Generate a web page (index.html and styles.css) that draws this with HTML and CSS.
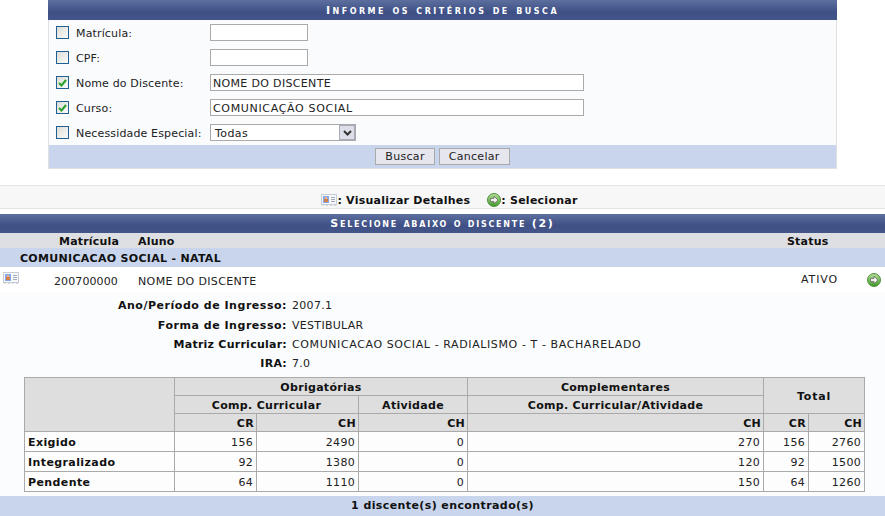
FILE: index.html
```html
<!DOCTYPE html>
<html lang="pt">
<head>
<meta charset="utf-8">
<title>Busca de discente</title>
<link rel="stylesheet" href="styles.css">
</head>
<body>
<svg class="defs" width="0" height="0" aria-hidden="true">
  <defs>
    <linearGradient id="ball" x1="0" y1="0" x2="0" y2="1"><stop offset="0" stop-color="#b9e09a"/><stop offset="1" stop-color="#3d9a2a"/></linearGradient>
    <symbol id="card" viewBox="0 0 16 12">
      <rect x="0.500" y="0.500" width="15" height="10" fill="#f6f8fb" stroke="#c8ccd4"/>
      <rect x="2" y="2" width="6" height="7" fill="#86a8ea"/>
      <rect x="4" y="3" width="2" height="2" fill="#f0b078"/>
      <rect x="3" y="5" width="4" height="3" fill="#d08048"/>
      <path d="M10 3.500h4M10 5.500h4M10 7.500h4" stroke="#a4acbc" stroke-width="1"/>
      <path d="M1 11.500h2M5 11.500h2M9 11.500h2M13 11.500h2" stroke="#d2d5da" stroke-width="1"/>
    </symbol>
    <symbol id="go" viewBox="0 0 14 14">
      <circle cx="7" cy="7" r="6.500" fill="url(#ball)" stroke="#4f8f3c"/>
      <path d="M7 3.200 L11 7 L7 10.800 V8.600 H3.500 V5.400 H7 Z" fill="#f2f2ee" stroke="#6a6a66" stroke-width="0.800"/>
    </symbol>
  </defs>
</svg>

<section class="form-box">
  <h2 class="bar">Informe os critérios de busca</h2>
  <div class="form-body">
    <div class="form-row"><span class="check"></span><label class="lbl">Matrícula:</label><span class="input short"></span></div>
    <div class="form-row"><span class="check"></span><label class="lbl">CPF:</label><span class="input short"></span></div>
    <div class="form-row"><span class="check on"><svg width="9" height="8" viewBox="0 0 9 8"><path d="M1 4l2.500 2.500L8 1" fill="none" stroke="#2aa02a" stroke-width="2"/></svg></span><label class="lbl">Nome do Discente:</label><span class="input long">NOME DO DISCENTE</span></div>
    <div class="form-row"><span class="check on"><svg width="9" height="8" viewBox="0 0 9 8"><path d="M1 4l2.500 2.500L8 1" fill="none" stroke="#2aa02a" stroke-width="2"/></svg></span><label class="lbl">Curso:</label><span class="input long wide">COMUNICAÇÃO SOCIAL</span></div>
    <div class="form-row"><span class="check"></span><label class="lbl">Necessidade Especial:</label>
      <span class="select"><span class="select-text">Todas</span><span class="select-btn"><svg width="9" height="6" viewBox="0 0 9 6"><path d="M1 1l3.500 3.500L8 1" fill="none" stroke="#333" stroke-width="2"/></svg></span></span>
    </div>
  </div>
  <div class="form-foot"><span class="btn">Buscar</span><span class="btn">Cancelar</span></div>
</section>

<div class="legend">
  <svg class="ic-card"><use href="#card"/></svg><span class="leg-text">: Visualizar Detalhes</span>
  <svg class="ic-go"><use href="#go"/></svg><span class="leg-text">: Selecionar</span>
</div>

<section class="results">
  <h2 class="bar small">Selecione abaixo o discente (2)</h2>
  <div class="cols"><span class="c-mat">Matrícula</span><span class="c-alu">Aluno</span><span class="c-sta">Status</span></div>
  <div class="group">COMUNICACAO SOCIAL - NATAL</div>
  <div class="student">
    <svg class="ic-card row-card"><use href="#card"/></svg>
    <span class="s-mat">200700000</span><span class="s-nome">NOME DO DISCENTE</span><span class="s-sta">ATIVO</span>
    <svg class="ic-go row-go"><use href="#go"/></svg>
  </div>
  <div class="details">
    <dl class="info">
      <div class="info-row"><dt class="spaced">Ano/Período de Ingresso:</dt><dd>2007.1</dd></div>
      <div class="info-row"><dt class="spaced">Forma de Ingresso:</dt><dd>VESTIBULAR</dd></div>
      <div class="info-row"><dt>Matriz Curricular:</dt><dd class="wide">COMUNICACAO SOCIAL - RADIALISMO - T - BACHARELADO</dd></div>
      <div class="info-row"><dt>IRA:</dt><dd>7.0</dd></div>
    </dl>
    <table class="grid">
      <colgroup><col class="w150"><col class="w82"><col class="w102"><col class="w109"><col class="w296"><col class="w45"><col class="w56"></colgroup>
      <thead>
        <tr><th rowspan="3"></th><th colspan="3" class="ctr">Obrigatórias</th><th class="ctr">Complementares</th><th colspan="2" rowspan="2" class="ctr big">Total</th></tr>
        <tr><th colspan="2" class="ctr">Comp. Curricular</th><th class="ctr">Atividade</th><th class="ctr">Comp. Curricular/Atividade</th></tr>
        <tr><th>CR</th><th>CH</th><th>CH</th><th>CH</th><th>CR</th><th>CH</th></tr>
      </thead>
      <tbody>
        <tr><th>Exigido</th><td>156</td><td>2490</td><td>0</td><td>270</td><td>156</td><td>2760</td></tr>
        <tr><th>Integralizado</th><td>92</td><td>1380</td><td>0</td><td>120</td><td>92</td><td>1500</td></tr>
        <tr><th>Pendente</th><td>64</td><td>1110</td><td>0</td><td>150</td><td>64</td><td>1260</td></tr>
      </tbody>
    </table>
  </div>
  <div class="res-foot">1 discente(s) encontrado(s)</div>
</section>
</body>
</html>
```
FILE: styles.css
```css
* { box-sizing: border-box; }
html, body { margin: 0; padding: 0; }
body { width: 885px; height: 516px; overflow: hidden; background: #fff; font: 11px "DejaVu Sans", Verdana, sans-serif; color: #222; }
.defs { position: absolute; }
.bar { margin: 0; height: 20px; line-height: 22px; text-align: center; color: #fff; font-size: 11px; font-weight: bold; font-variant: small-caps; letter-spacing: 2.500px; text-transform: lowercase; background: linear-gradient(#5d6f9e, #3f5086 60%, #44558a); }
.bar::first-letter { text-transform: uppercase; }
.bar.small { height: 19px; line-height: 20px; letter-spacing: 1.750px; }
.form-box { width: 789px; margin-left: 48px; border: solid #e0e0e0; border-width: 0 1px 1px; }
.form-body { background: #f9fbfd; height: 125px; padding-left: 7px; }
.form-box .bar { margin: 0 -1px; }
.form-row { height: 25px; display: flex; align-items: center; }
.check { width: 13px; height: 13px; border: 1px solid #1f5f94; background: linear-gradient(135deg, #dcdcd6, #fbfbfa); display: flex; align-items: center; justify-content: center; margin-right: 7px; }
.lbl { width: 134px; padding-top: 2px; letter-spacing: .15px; }
.input { display: block; height: 17px; line-height: 17px; border: 1px solid #aaa; background: #fff; padding-left: 2px; color: #222; letter-spacing: .33px; }
.short { width: 98px; }
.long { width: 374px; }
.long.wide { letter-spacing: .67px; }
.select { width: 146px; height: 17px; border: 1px solid #aaa; background: #fff; display: flex; align-items: center; justify-content: space-between; padding-left: 4px; letter-spacing: .4px; }
.select-text { padding-top: 2px; }
.select-btn { width: 16px; height: 15px; background: #dcdfe8; border: 1px solid #aab; display: flex; align-items: center; justify-content: center; }
.form-foot { height: 23px; background: #c8d5ec; display: flex; justify-content: center; align-items: center; gap: 4px; }
.btn { height: 17px; line-height: 16px; padding: 0 9px; border: 1px solid #aaa; background: #e6e6ee; letter-spacing: .3px; }
.legend { margin-top: 16px; height: 24px; padding: 7px 0 0 14px; background: #f7f7f7; border: solid #e3e3e3; border-width: 1px 0 1px; display: flex; align-items: center; justify-content: center; font-weight: bold; color: #111; }
.leg-text { letter-spacing: .25px; }
.ic-card { width: 16px; height: 12px; margin-bottom: 2px; }
.ic-go { width: 14px; height: 14px; margin-left: 17px; margin-bottom: 2px; }
.results { margin-top: 5px; }
.cols { height: 15px; padding-top: 2px; background: #dedfe3; font-weight: bold; line-height: 14px; color: #111; display: flex; letter-spacing: .2px; }
.c-mat { margin-left: 59px; width: 79px; }
.c-alu { width: 649px; }
.group { height: 19px; line-height: 21px; background: #c8d5ec; padding-left: 20px; font-weight: bold; color: #111; letter-spacing: .3px; }
.student { height: 25px; display: flex; align-items: center; }
.row-card { margin: 0 0 3px 3px; }
.s-mat { margin: 3px 0 0 35px; width: 84px; letter-spacing: .1px; }
.s-nome { width: 663px; margin-top: 3px; letter-spacing: .37px; }
.s-sta { width: 66px; letter-spacing: .9px; }
.row-go { margin: 0; }
.details { background: #fbfcfd; height: 204px; padding: 4px 21px 0 24px; }
.info { margin: 0; }
.info-row { display: flex; height: 19px; align-items: center; }
.info-row:first-child { margin-bottom: 1px; }
.info dt { width: 263px; text-align: right; font-weight: bold; color: #111; letter-spacing: .25px; }
.info dt.spaced { letter-spacing: .53px; }
.info dd { margin: 0 0 0 5px; letter-spacing: .3px; }
.info dd.wide { letter-spacing: .6px; }
.grid { width: 840px; margin-top: 4px; table-layout: fixed; border-collapse: collapse; border: 1px solid #aaa; }
.w150 { width: 150px; } .w82 { width: 82px; } .w102 { width: 102px; } .w109 { width: 109px; } .w296 { width: 296px; } .w45 { width: 45px; } .w56 { width: 56px; }
.grid th, .grid td { border: 1px solid #aaa; padding: 1px 2px 0; text-align: right; height: 18px; letter-spacing: .3px; }
.grid thead th { background: #dedede; color: #111; }
.grid thead th.ctr { text-align: center; }
.grid thead th.big { letter-spacing: .8px; }
.grid tbody th { text-align: left; padding-left: 3px; background: #fdfdfd; color: #111; height: 20px; letter-spacing: .4px; }
.grid tbody td { background: #fdfdfd; height: 20px; padding-right: 3px; }
.res-foot { height: 20px; line-height: 20px; background: #c8d5ec; text-align: center; font-weight: bold; color: #111; letter-spacing: .4px; }
```
